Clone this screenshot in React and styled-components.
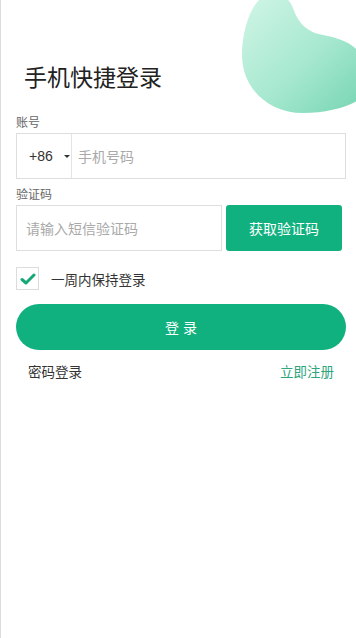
import React from "react";
import styled, { createGlobalStyle } from "styled-components";

const GREEN = "#11b17f";

const Global = createGlobalStyle`
  html, body { margin: 0; padding: 0; background: #fff; }
  body { font-family: "Liberation Sans", "Noto Sans CJK SC", sans-serif; }
  * { box-sizing: border-box; }
`;

const Page = styled.div`
  position: relative;
  width: 356px;
  height: 100vh;
  min-height: 638px;
  border-left: 1px solid #dcdcdc;
  overflow: hidden;
  background: #fff;
`;

const Blob = styled.svg`
  position: absolute;
  top: 0;
  right: 0;
  width: 116px;
  height: 116px;
`;

const Content = styled.div`
  position: relative;
  display: flex;
  flex-direction: column;
  padding: 66px 10px 0 15px;
`;

const Title = styled.h1`
  margin: 0 0 24px 8px;
  font-size: 23px;
  line-height: 24px;
  font-weight: 400;
  color: #222;
`;

const Field = styled.div`
  display: flex;
  flex-direction: column;
  margin-top: ${(p) => p.$top || 0}px;
`;

const Label = styled.div`
  font-size: 12px;
  line-height: 18px;
  color: #666;
  margin-bottom: 1px;
`;

const InputBox = styled.div`
  display: flex;
  align-items: center;
  height: 46px;
  border: 1px solid #dedede;
  background: #fff;
  flex: ${(p) => (p.$grow ? 1 : "none")};
`;

const Country = styled.div`
  display: flex;
  align-items: center;
  width: 55px;
  height: 100%;
  padding-left: 12px;
  border-right: 1px solid #e3e3e3;
  font-size: 14px;
  color: #333;
`;

const Caret = styled.span`
  margin-left: 11px;
  width: 0;
  height: 0;
  border-left: 3px solid transparent;
  border-right: 3px solid transparent;
  border-top: 3px solid #333;
`;

const Placeholder = styled.span`
  font-size: 14px;
  color: #a9a9a9;
  padding-left: ${(p) => p.$pad}px;
`;

const CodeRow = styled.div`
  display: flex;
  gap: 4px;
  padding-right: 4px;
`;

const CodeButton = styled.div`
  width: 116px;
  height: 46px;
  border-radius: 3px;
  background: ${GREEN};
  color: #fff;
  font-size: 14px;
  display: flex;
  align-items: center;
  justify-content: center;
`;

const CheckRow = styled.div`
  display: flex;
  align-items: center;
  gap: 12px;
  margin-top: 16px;
  font-size: 13.5px;
  color: #333;
`;

const CheckBox = styled.div`
  width: 23px;
  height: 23px;
  border: 1px solid #dcdcdc;
  display: flex;
  align-items: center;
  justify-content: center;
`;

const LoginButton = styled.div`
  margin-top: 14px;
  height: 46px;
  border-radius: 23px;
  background: ${GREEN};
  color: #fff;
  font-size: 14px;
  display: flex;
  align-items: center;
  justify-content: center;
  white-space: pre;
`;

const Footer = styled.div`
  display: flex;
  justify-content: space-between;
  padding: 0 12px;
  margin-top: 13px;
  font-size: 13.5px;
  line-height: 20px;
`;

const Link = styled.span`
  color: ${(p) => (p.$accent ? "#2ea57c" : "#333")};
`;

export default function App() {
  return (
    <>
      <Global />
      <Page>
        <Blob viewBox="240 0 116 116">
          <defs>
            <linearGradient id="bg" x1="0" y1="0" x2="1" y2="1">
              <stop offset="0" stopColor="#d2f6e7" />
              <stop offset="0.55" stopColor="#a6e8cf" />
              <stop offset="1" stopColor="#74d4b1" />
            </linearGradient>
          </defs>
          <path
            d="M264 -4 C276 -9 288 -5 293 8 C297 20 305 32 323 35 C345 39 365 48 365 70 L365 95 C355 105 330 113 303 113 C268 113 242 88 242 55 C242 32 250 4 264 -4 Z"
            fill="url(#bg)"
          />
        </Blob>
        <Content>
          <Title>手机快捷登录</Title>
          <Field>
            <Label>账号</Label>
            <InputBox>
              <Country>
                +86
                <Caret />
              </Country>
              <Placeholder $pad={6}>手机号码</Placeholder>
            </InputBox>
          </Field>
          <Field $top={7}>
            <Label>验证码</Label>
            <CodeRow>
              <InputBox $grow>
                <Placeholder $pad={9}>请输入短信验证码</Placeholder>
              </InputBox>
              <CodeButton>获取验证码</CodeButton>
            </CodeRow>
          </Field>
          <CheckRow>
            <CheckBox>
              <svg width="16" height="14" viewBox="0 0 16 14">
                <path
                  d="M2 7.5 L6 11 L14 3"
                  fill="none"
                  stroke="#17a878"
                  strokeWidth="3"
                  strokeLinecap="round"
                  strokeLinejoin="round"
                />
              </svg>
            </CheckBox>
            一周内保持登录
          </CheckRow>
          <LoginButton>登 录</LoginButton>
          <Footer>
            <Link>密码登录</Link>
            <Link $accent>立即注册</Link>
          </Footer>
        </Content>
      </Page>
    </>
  );
}
